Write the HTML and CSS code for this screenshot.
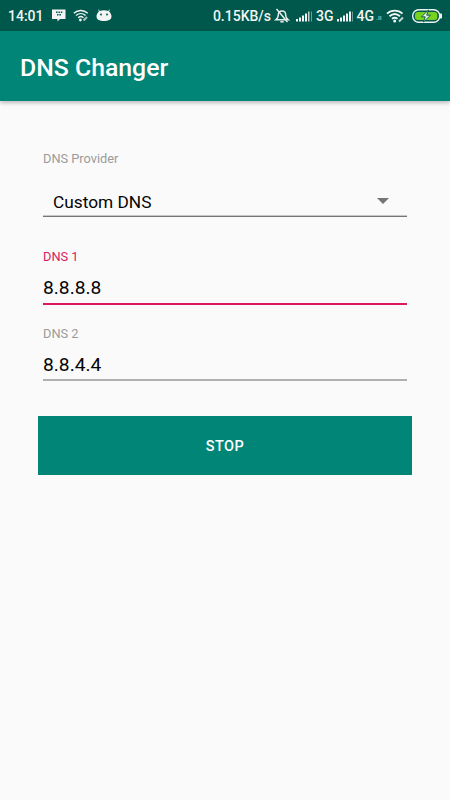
FILE: index.html
```html
<!DOCTYPE html>
<html lang="en">
<head>
<meta charset="utf-8">
<title>DNS Changer</title>
<link rel="stylesheet" href="styles.css">
</head>
<body>
<div class="screen">
  <div class="status">
    <div class="status-left">
      <span class="clock">14:01</span>
      <svg class="ic-msg" width="14" height="13" viewBox="0 0 14 13"><path fill="#f2f5f4" d="M0 .5h13.500v9.500H8l-2.500 2.500V10H0z"/><path fill="#00574b" d="M4 2.500h1.500v1.500H4zM6.400 2.500h1.500v1.500H6.400zM8.800 2.500h1.500v1.500H8.800zM5 5h1.500v1.500H5zM7.400 5h1.500v1.500H7.400z"/></svg>
      <svg class="ic-wifi" width="16" height="13" viewBox="0 0 16 13"><g fill="none" stroke="#f2f5f4" stroke-width="1.400"><path d="M.8 4.200C4.800.6 10.800.6 14.800 4.200"/><path d="M3 6.500C5.800 4 9.800 4 12.600 6.500"/><path d="M5.200 8.700C6.800 7.300 8.800 7.300 10.400 8.700"/></g><circle cx="7.400" cy="11" r="1.400" fill="#f2f5f4"/><path d="M10.500 11.500l3.500-3.500" stroke="#a9c0bb" stroke-width="2.200"/></svg>
      <svg class="ic-bot" width="16" height="13" viewBox="0 0 16 13"><path fill="#f2f5f4" d="M3 2.500L2 .8l.5-.3L3.800 2C6 1 10 1 12.200 2L13.500.5l.5.3-1 1.700c1.500 1 2.500 3 2.500 5 0 3-3 4.500-7.500 4.500S.5 10.500.5 7.500c0-2 1-4 2.500-5z"/><circle cx="5" cy="5.500" r="1" fill="#00574b"/><circle cx="11" cy="5.500" r="1" fill="#00574b"/></svg>
    </div>
    <div class="status-right">
      <span class="speed">0.15KB/s</span>
      <svg class="ic-bell" width="16" height="15" viewBox="0 0 16 15"><g fill="none" stroke="#e6eeec" stroke-width="1.500"><path d="M2 11.700c1.500-1 2.300-2 2.300-4.700 0-2.300 1.600-4 3.700-4s3.700 1.700 3.700 4c0 2.700.8 3.700 2.300 4.700z"/><path d="M2.500 1l11 13"/><path d="M6.300 13.800h3.400"/></g></svg>
      <svg class="ic-bars" width="17" height="12" viewBox="0 0 17 12"><path fill="#f2f5f4" d="M0 9h2v2.500H0zM3 7.500h2v4H3zM6 5.500h2v6H6zM9 3.500h2v8H9z"/><path fill="#c4d4d1" d="M12 1.500h1.500v10H12z"/><path fill="#6f9c94" d="M15 1.500h1v10h-1z"/></svg>
      <span class="net">3G</span>
      <svg class="ic-bars2" width="17" height="12" viewBox="0 0 17 12"><path fill="#f2f5f4" d="M0 9h2v2.500H0zM3 7.500h2v4H3zM6 5.500h2v6H6zM9 3.500h2v8H9zM12 1.500h2v10h-2z"/><path fill="#6f9c94" d="M15 1.500h1v10h-1z"/></svg>
      <span class="net">4G</span>
      <span class="arrows">.ıı</span>
      <svg class="ic-wifi2" width="19" height="14" viewBox="0 0 19 14"><g fill="none" stroke="#f2f5f4" stroke-width="1.800"><path d="M1 4.700C5.500.6 12 .6 16.500 4.700"/><path d="M3.500 7.300C6.700 4.500 10.800 4.500 14 7.300"/><path d="M6 9.800C7.800 8.400 9.700 8.400 11.500 9.800"/></g><circle cx="8.700" cy="12" r="1.500" fill="#f2f5f4"/><path d="M13 12.500l4-4" stroke="#c4d4d1" stroke-width="2"/></svg>
      <svg class="ic-batt" width="31" height="16" viewBox="0 0 31 16"><rect x="1.700" y="1.700" width="27" height="12.600" rx="6" fill="none" stroke="#eef3f1" stroke-width="1.400"/><rect x="4" y="4" width="22.400" height="8" rx="3" fill="#78d11f"/><path fill="#eef3f1" d="M29 5.500h1c.5 0 1 .4 1 .8v3.400c0 .4-.5.800-1 .800h-1z"/><path fill="#eef3f1" stroke="#00574b" stroke-width=".9" d="M17.500 2L10.500 8.800h3.700L12.500 14l7-6.800h-3.800z"/></svg>
    </div>
  </div>
  <header class="appbar"><h1 class="title">DNS Changer</h1></header>
  <main class="content">
    <div class="caption provider-label">DNS Provider</div>
    <div class="select">
      <span class="select-text">Custom DNS</span>
      <span class="caret"></span>
    </div>
    <div class="field focused">
      <div class="caption">DNS 1</div>
      <div class="value">8.8.8.8</div>
    </div>
    <div class="field second">
      <div class="caption">DNS 2</div>
      <div class="value">8.8.4.4</div>
    </div>
    <button class="stop">STOP</button>
  </main>
</div>
</body>
</html>
```
FILE: styles.css
```css
* { box-sizing: border-box; }
html, body { margin: 0; padding: 0; }
body { width: 450px; height: 800px; overflow: hidden; background: #fafafa; font-family: Roboto, sans-serif; }
.screen { display: flex; flex-direction: column; height: 800px; }
.status { height: 31px; flex: none; background: #00574b; color: #f2f5f4; display: flex; justify-content: space-between; align-items: center; padding: 0 8px; font-weight: 500; }
.status-left, .status-right { display: flex; align-items: center; }
.clock { font-size: 14px; width: 44px; }
.ic-wifi { margin-left: 7px; }
.ic-bot { margin-left: 7px; }
.speed { font-size: 14px; }
.ic-bell { margin-left: 3px; }
.ic-bars { margin-left: 6px; }
.net { font-size: 14px; margin-left: 3px; }
.ic-bars2 { margin-left: 3px; }
.arrows { font-size: 7px; line-height: 8px; margin: 5px 0 0 2px; color: #a9c0bb; width: 8px; }
.ic-wifi2 { margin-left: 2px; }
.ic-batt { margin-left: 6px; }
.appbar { height: 70px; flex: none; background: #008577; display: flex; align-items: center; padding: 3px 20px 0; box-shadow: 0 2px 4px rgba(0,0,0,.25); position: relative; }
.title { margin: 0; color: #fff; font-size: 24.800px; font-weight: 500; line-height: 32px; }
.content { flex: 1; padding: 0 38px; display: flex; flex-direction: column; }
.caption { font-size: 12.800px; line-height: 14px; color: #9b9b9b; padding-left: 5px; }
.provider-label { margin-top: 51px; }
.select { margin: 15px 5px 0; height: 36px; border-bottom: 1px solid #757575; box-shadow: inset 0 -1px 0 #c8c8c8; display: flex; align-items: center; justify-content: space-between; padding: 7px 18px 0 10px; }
.select-text { font-size: 17.300px; color: #050505; }
.caret { width: 0; height: 0; border-left: 6.500px solid transparent; border-right: 6.500px solid transparent; border-top: 6.500px solid #757575; margin-top: -2px; }
.field { margin: 0 5px; }
.field .caption { padding-left: 0; }
.focused { margin-top: 33px; }
.focused .caption { color: #d81b60; }
.second { margin-top: 22px; }
.value { height: 40px; border-bottom: 2px solid #b0b0b0; font-size: 19.200px; line-height: 30px; color: #050505; padding-top: 9px; }
.focused .value { height: 41px; border-bottom: 2px solid #d81b60; }
.stop { margin-top: 35px; height: 59px; border: 0; border-radius: 0; background: #008577; color: #fff; font: 500 14.500px Roboto, sans-serif; letter-spacing: .5px; padding: 2px 0 0; }
```
